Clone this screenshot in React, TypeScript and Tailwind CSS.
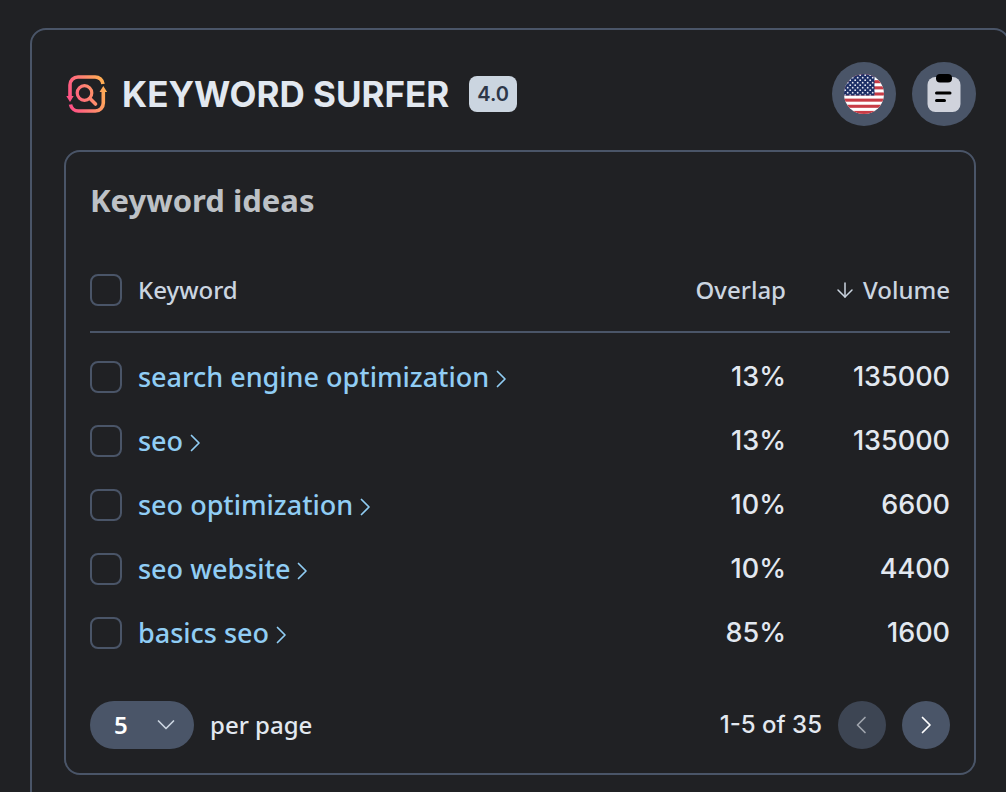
import React, { useState } from 'react';
import { ArrowDown } from 'lucide-react';

interface KeywordIdea {
  keyword: string;
  overlap: number;
  volume: number;
}

const IDEAS: KeywordIdea[] = [
  { keyword: 'search engine optimization', overlap: 13, volume: 135000 },
  { keyword: 'seo', overlap: 13, volume: 135000 },
  { keyword: 'seo optimization', overlap: 10, volume: 6600 },
  { keyword: 'seo website', overlap: 10, volume: 4400 },
  { keyword: 'basics seo', overlap: 85, volume: 1600 },
];

const CHECKBOX =
  'block h-8 w-8 shrink-0 appearance-none rounded-lg border-2 border-[#4a5568] bg-transparent checked:bg-[#4a5568]';

function Logo() {
  return (
    <svg viewBox="-2 -1 44 40" className="h-10 w-11 shrink-0" fill="none" aria-hidden="true">
      <defs>
        <linearGradient id="surfer" x1="2" y1="26" x2="40" y2="14" gradientUnits="userSpaceOnUse">
          <stop stopColor="#ff4d86" />
          <stop offset="0.5" stopColor="#ff8073" />
          <stop offset="1" stopColor="#ffb052" />
        </linearGradient>
      </defs>
      <g stroke="url(#surfer)" strokeWidth="3.6">
        <path d="M4 22V10a8 8 0 0 1 8-8H29a8 8 0 0 1 8 7" />
        <path d="M37.300 15V28a8 8 0 0 1-8 8H12.500a8 8 0 0 1-8-6.500" />
        <circle cx="18.500" cy="18" r="7.300" strokeWidth="3.200" />
        <path d="M24 23.500l5.500 5.500" strokeWidth="3.600" strokeLinecap="round" />
      </g>
      <path d="M0.300 21h7.400l-3.700 6zM33.500 17h7.600l-3.800-6z" fill="url(#surfer)" />
    </svg>
  );
}

function UsFlag() {
  return (
    <svg viewBox="0 0 40 40" className="h-10 w-10" aria-hidden="true">
      <defs>
        <clipPath id="flag-clip">
          <circle cx="20" cy="20" r="20" />
        </clipPath>
        <pattern id="stars" width="5" height="5" patternUnits="userSpaceOnUse">
          <circle cx="1.2" cy="1.2" r="0.9" fill="#e6e9f2" />
          <circle cx="3.700" cy="3.700" r="0.9" fill="#e6e9f2" />
        </pattern>
      </defs>
      <g clipPath="url(#flag-clip)">
        <rect width="40" height="40" fill="#fff" />
        {[0, 1, 2, 3, 4, 5, 6].map(i => (
          <rect key={i} y={i * 6.15} width="40" height="3.08" fill="#c83c46" />
        ))}
        <rect width="30.500" height="21.500" fill="#1d2f66" />
        <rect width="30.500" height="21.500" fill="url(#stars)" />
      </g>
    </svg>
  );
}

function ClipboardIcon() {
  return (
    <svg viewBox="0 0 40 40" className="h-10 w-10" aria-hidden="true">
      <rect x="3.500" y="3" width="33" height="35" rx="8" fill="#d0d3dc" />
      <rect x="12" y="0" width="16" height="8.500" rx="4" fill="#000" />
      <path d="M12.500 19h13.500M12.500 26.500h8" stroke="#000" strokeWidth="3" strokeLinecap="round" />
    </svg>
  );
}

function Chevron({ d, className }: { d: string; className: string }) {
  return (
    <svg viewBox="0 0 20 20" className={className} fill="none" stroke="currentColor" strokeWidth="1.7" strokeLinecap="round" strokeLinejoin="round" aria-hidden="true">
      <path d={d} />
    </svg>
  );
}

const RIGHT = 'M6.500 2.500l7.500 7.500-7.500 7.500';
const LEFT = 'M13 2.500L5.500 10l7.500 7.500';
const DOWN = 'M2.500 6l7.500 7.500L17.500 6';

export default function App() {
  const [selected, setSelected] = useState<string[]>([]);

  const toggle = (keyword: string) =>
    setSelected(prev => (prev.includes(keyword) ? prev.filter(k => k !== keyword) : [...prev, keyword]));

  return (
    <div className="min-h-screen overflow-hidden bg-[#202124] pl-[30px] pt-7 font-['Noto_Sans',sans-serif] font-medium text-[#e2e8f0]">
      <main className="-mr-1 min-h-screen rounded-2xl border-2 border-[#4a5568] p-8">
        <header className="flex h-16 items-center">
          <Logo />
          <h1 className="ml-3.5 whitespace-nowrap font-['Inter',sans-serif] text-[35px] font-bold leading-10">KEYWORD SURFER</h1>
          <span className="ml-5 flex h-9 items-center rounded-lg bg-[#cbd5e0] px-2 font-['Inter',sans-serif] text-xl font-semibold text-[#2d3748]">4.0</span>
          <div className="ml-auto flex gap-4">
            <button aria-label="Country: United States" className="flex h-16 w-16 items-center justify-center rounded-full bg-[#4a5568]">
              <UsFlag />
            </button>
            <button aria-label="Clipboard" className="flex h-16 w-16 items-center justify-center rounded-full bg-[#4a5568]">
              <ClipboardIcon />
            </button>
          </div>
        </header>

        <section className="mt-6 rounded-2xl border-2 border-[#4a5568] p-6">
          <h2 className="pt-1 text-[31px] font-bold leading-10 text-[#bdc1c6]">Keyword ideas</h2>

          <table className="mt-7 w-full">
            <thead>
              <tr className="h-[84px] border-b-2 border-[#4a5568] text-2xl text-[#cbd5e0]">
                <th className="p-0 text-left font-medium">
                  <label className="flex items-center gap-4">
                    <input
                      type="checkbox"
                      className={CHECKBOX}
                      checked={selected.length === IDEAS.length}
                      onChange={e => setSelected(e.target.checked ? IDEAS.map(i => i.keyword) : [])}
                    />
                    Keyword
                  </label>
                </th>
                <th className="w-40 p-0 text-right font-medium">Overlap</th>
                <th className="w-[164px] p-0 font-medium">
                  <button className="ml-auto flex items-center gap-1.5">
                    <ArrowDown className="h-6 w-6" strokeWidth={1.5} />
                    Volume
                  </button>
                </th>
              </tr>
            </thead>
            <tbody className="text-[27px] leading-8 before:block before:h-3">
              {IDEAS.map(({ keyword, overlap, volume }) => (
                <tr key={keyword} className="h-16">
                  <td className="p-0">
                    <div className="flex items-center gap-4">
                      <input
                        type="checkbox"
                        aria-label={`Select ${keyword}`}
                        className={CHECKBOX}
                        checked={selected.includes(keyword)}
                        onChange={() => toggle(keyword)}
                      />
                      <a href="#" className="flex items-center gap-0.5 text-[#90cdf4]">
                        {keyword}
                        <Chevron d={RIGHT} className="mt-1 h-5 w-5" />
                      </a>
                    </div>
                  </td>
                  <td className="p-0 text-right font-['Inter',sans-serif]">{overlap}%</td>
                  <td className="p-0 text-right font-['Inter',sans-serif]">{volume}</td>
                </tr>
              ))}
            </tbody>
          </table>

          <footer className="mt-9 flex items-center text-2xl">
            <div className="relative">
              <select
                id="per-page"
                className="h-12 w-[104px] appearance-none rounded-full bg-[#4a5568] pl-6 font-semibold text-white"
              >
                <option>5</option>
                <option>10</option>
                <option>25</option>
              </select>
              <Chevron d={DOWN} className="pointer-events-none absolute right-[18px] top-3.5 h-5 w-5 text-[#cbd5e0]" />
            </div>
            <label htmlFor="per-page" className="ml-4">per page</label>
            <span className="ml-auto font-['Inter',sans-serif]">1-5 of 35</span>
            <button aria-label="Previous page" disabled className="ml-4 flex h-12 w-12 items-center justify-center rounded-full bg-[#3d4553] text-[#a0a5ae]">
              <Chevron d={LEFT} className="h-5 w-5" />
            </button>
            <button aria-label="Next page" className="ml-4 flex h-12 w-12 items-center justify-center rounded-full bg-[#4a5568] text-white">
              <Chevron d={RIGHT} className="h-5 w-5" />
            </button>
          </footer>
        </section>
      </main>
    </div>
  );
}
